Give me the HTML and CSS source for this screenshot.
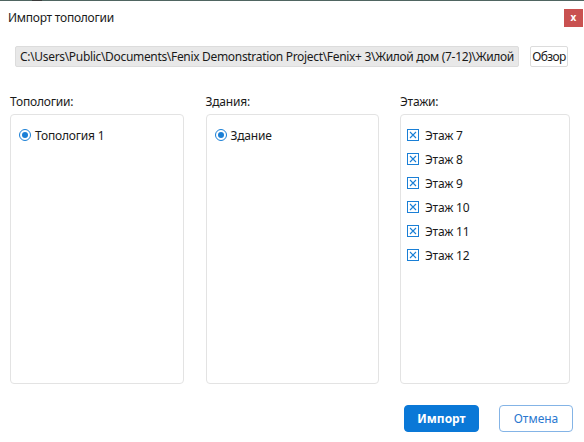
FILE: index.html
```html
<!DOCTYPE html>
<html lang="ru">
<head>
<meta charset="utf-8">
<title>Импорт топологии</title>
<link rel="stylesheet" href="styles.css">
</head>
<body>
<div class="dialog">
  <div class="topline"><span class="topline-dark"></span></div>
  <div class="titlebar">
    <span class="title">Импорт топологии</span>
    <span class="close">x</span>
  </div>
  <div class="pathrow">
    <div class="pathfield">C:\Users\Public\Documents\Fenix Demonstration Project\Fenix+ 3\Жилой дом (7-12)\Жилой</div>
    <button class="browse">Обзор</button>
  </div>
  <div class="columns">
    <div class="col">
      <div class="label">Топологии:</div>
      <div class="panel">
        <div class="item"><span class="radio"></span>Топология 1</div>
      </div>
    </div>
    <div class="col">
      <div class="label">Здания:</div>
      <div class="panel">
        <div class="item"><span class="radio"></span>Здание</div>
      </div>
    </div>
    <div class="col">
      <div class="label">Этажи:</div>
      <div class="panel panel-checks">
        <div class="item check-item"><span class="check"><svg width="12" height="12" viewBox="0 0 12 12"><rect x="0.5" y="0.5" width="11" height="11" fill="none" stroke="#1a7fd6"/><path d="M3 3L9 9M9 3L3 9" stroke="#1a7fd6" stroke-width="1.1"/></svg></span>Этаж 7</div>
        <div class="item check-item"><span class="check"><svg width="12" height="12" viewBox="0 0 12 12"><rect x="0.5" y="0.5" width="11" height="11" fill="none" stroke="#1a7fd6"/><path d="M3 3L9 9M9 3L3 9" stroke="#1a7fd6" stroke-width="1.1"/></svg></span>Этаж 8</div>
        <div class="item check-item"><span class="check"><svg width="12" height="12" viewBox="0 0 12 12"><rect x="0.5" y="0.5" width="11" height="11" fill="none" stroke="#1a7fd6"/><path d="M3 3L9 9M9 3L3 9" stroke="#1a7fd6" stroke-width="1.1"/></svg></span>Этаж 9</div>
        <div class="item check-item"><span class="check"><svg width="12" height="12" viewBox="0 0 12 12"><rect x="0.5" y="0.5" width="11" height="11" fill="none" stroke="#1a7fd6"/><path d="M3 3L9 9M9 3L3 9" stroke="#1a7fd6" stroke-width="1.1"/></svg></span>Этаж 10</div>
        <div class="item check-item"><span class="check"><svg width="12" height="12" viewBox="0 0 12 12"><rect x="0.5" y="0.5" width="11" height="11" fill="none" stroke="#1a7fd6"/><path d="M3 3L9 9M9 3L3 9" stroke="#1a7fd6" stroke-width="1.1"/></svg></span>Этаж 11</div>
        <div class="item check-item"><span class="check"><svg width="12" height="12" viewBox="0 0 12 12"><rect x="0.5" y="0.5" width="11" height="11" fill="none" stroke="#1a7fd6"/><path d="M3 3L9 9M9 3L3 9" stroke="#1a7fd6" stroke-width="1.1"/></svg></span>Этаж 12</div>
      </div>
    </div>
  </div>
  <div class="actions">
    <button class="btn btn-primary">Импорт</button>
    <button class="btn btn-secondary">Отмена</button>
  </div>
</div>
</body>
</html>
```

FILE: styles.css
```css
html, body {
  margin: 0;
  padding: 0;
  background: #ffffff;
}
body {
  width: 584px;
  height: 442px;
  overflow: hidden;
  font-family: "Noto Sans", "Open Sans", "Liberation Sans", sans-serif;
  font-size: 12px;
  color: #1a1a1a;
}
.dialog {
  display: flex;
  flex-direction: column;
  height: 442px;
}
.topline {
  height: 1px;
  background: #4f6561;
  display: flex;
}
.topline-dark {
  margin-left: 32px;
  width: 10px;
  background: #3a3a3a;
}
.titlebar {
  height: 33px;
  display: flex;
  align-items: center;
  justify-content: space-between;
  padding-left: 8px;
  padding-right: 1px;
}
.title {
  font-size: 12px;
  letter-spacing: -0.25px;
}
.close {
  width: 19px;
  height: 18px;
  background: #c95150;
  color: #ffffff;
  font-weight: bold;
  font-size: 10px;
  line-height: 17px;
  text-align: center;
}
.pathrow {
  display: flex;
  align-items: center;
  margin-top: 12px;
  padding-left: 15px;
}
.pathfield {
  width: 504px;
  height: 21px;
  box-sizing: border-box;
  background: #e8e8e8;
  border: 1px solid #dcdcdc;
  border-radius: 2px;
  padding-left: 4px;
  line-height: 19px;
  white-space: nowrap;
  overflow: hidden;
  font-size: 12px;
  letter-spacing: -0.32px;
}
.browse {
  margin-left: 11px;
  width: 38px;
  height: 21px;
  box-sizing: border-box;
  background: #ffffff;
  border: 1px solid #dcdcdc;
  border-radius: 2px;
  padding: 0;
  font-family: inherit;
  font-size: 12px;
  color: #1a1a1a;
  letter-spacing: -0.6px;
  white-space: nowrap;
}
.columns {
  display: grid;
  grid-template-columns: 174px 173px 170px;
  column-gap: 21.5px;
  padding-left: 10px;
  margin-top: 27px;
}
.col {
  display: flex;
  flex-direction: column;
}
.label {
  height: 16px;
  line-height: 16px;
  margin-bottom: 4px;
  letter-spacing: -0.2px;
}
.panel {
  height: 270px;
  box-sizing: border-box;
  border: 1px solid #e3e3e3;
  border-radius: 4px;
  padding: 12px 0 0 8px;
  display: flex;
  flex-direction: column;
}
.panel-checks {
  padding-top: 12px;
  padding-left: 6px;
  gap: 8px;
}
.item {
  display: flex;
  align-items: center;
  height: 16px;
  letter-spacing: -0.2px;
}
.radio {
  width: 12px;
  height: 12px;
  box-sizing: border-box;
  border: 1.5px solid #1a7fd6;
  border-radius: 50%;
  margin-right: 4px;
  display: flex;
  align-items: center;
  justify-content: center;
}
.radio::after {
  content: "";
  width: 6px;
  height: 6px;
  border-radius: 50%;
  background: #1a7fd6;
}
.check {
  width: 12px;
  height: 12px;
  margin-right: 6px;
  display: flex;
}
.actions {
  display: flex;
  justify-content: flex-end;
  gap: 20px;
  padding-right: 11px;
  margin-top: 21px;
}
.btn {
  width: 75px;
  height: 27px;
  box-sizing: border-box;
  border-radius: 4px;
  font-family: inherit;
  font-size: 12px;
  padding: 0;
}
.btn-primary {
  background: #0a78d7;
  border: 1px solid #0a78d7;
  color: #ffffff;
  font-weight: bold;
}
.btn-secondary {
  width: 74px;
  background: #ffffff;
  border: 1px solid #84b4e6;
  color: #2a78cf;
}
```
